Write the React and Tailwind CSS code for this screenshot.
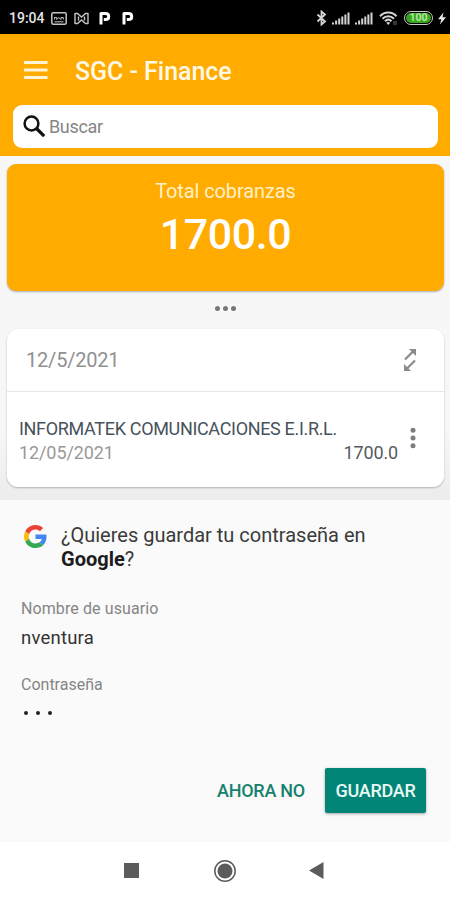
const signalBars = [2, 4, 6, 8, 10, 12]

function SignalIcon() {
  return (
    <svg width="18" height="13" viewBox="0 0 18 13" fill="#d4d4d4">
      {signalBars.map((height, i) => (
        <rect key={height} x={i * 3.1} y={12.5 - height} width="2" height={height} />
      ))}
    </svg>
  )
}

function ParkingIcon() {
  return (
    <svg width="12" height="14" viewBox="0 0 12 14" fill="none" stroke="#fff" strokeWidth="3">
      <path d="M2 13.500V2.500H6.200C8.500 2.500 9.700 3.600 9.700 5.400S8.500 8.500 6.500 8.500H4.800" strokeLinejoin="round" />
    </svg>
  )
}

function StatusBar() {
  return (
    <div className="flex h-[34px] items-center bg-black pt-[2px] pl-[9px] text-[#e5e5e5]">
      <span className="w-[42px] whitespace-nowrap text-[14px] font-medium">19:04</span>
      <svg width="16" height="13" viewBox="0 0 16 13" fill="none" stroke="#c4c4c4" strokeWidth="1.5">
        <rect x="0.8" y="0.8" width="14.4" height="11.4" rx="1.5" />
        <path d="M3.500 7.500V5.500h2.300v2M5.800 7.500l2-2 2 2M10 7.500V5.500h2.300v2M3.500 9.800h9" strokeWidth="1" />
      </svg>
      <svg className="ml-[7px]" width="15" height="13" viewBox="0 0 15 13" fill="none" stroke="#c4c4c4" strokeWidth="1.4">
        <path d="M1 1v11M14 1v11M1 1.500h2.500l4 3.500 4-3.500H14M1 11.500h2.500l4-3.500 4 3.500H14M4.500 4.500v4M10.500 4.500v4" />
      </svg>
      <div className="ml-2.5 flex gap-[11px]">
        <ParkingIcon />
        <ParkingIcon />
      </div>
      <div className="ml-auto flex items-center pr-[3px]">
        <svg width="11" height="16" viewBox="0 0 11 16" fill="none" stroke="#d4d4d4" strokeWidth="1.8">
          <path d="M1.500 4.500l7.500 7-3.500 3V1.500l3.500 3-7.500 7" />
        </svg>
        <span className="ml-[5px]"><SignalIcon /></span>
        <span className="ml-[5px]"><SignalIcon /></span>
        <svg className="ml-[6px]" width="19" height="15" viewBox="0 0 19 15" fill="none" stroke="#d4d4d4" strokeWidth="2">
          <path d="M1 5.200C5.500 0.300 13 0.300 17.500 5.200M3.500 7.800c3.400-3.500 8.100-3.500 11.500 0M6 10.300c2-2 4.500-2 6.500 0" />
          <path d="M7.300 11.800a3 3 0 013.900 0l-1.950 2.200z" fill="#d4d4d4" stroke="none" />
          <path d="M15 10v4M17 10v4" strokeWidth="0.9" stroke="#777" />
        </svg>
        <div className="ml-[6px] flex h-[14px] w-[29px] items-center justify-center rounded-full border-[1.5px] border-[#c8c8c8] bg-black p-px">
          <div className="flex h-full w-full items-center justify-center rounded-full bg-[#38a51f] text-[10.5px] leading-none font-bold text-[#b5e8a0]">
            100
          </div>
        </div>
        <svg className="mr-px ml-[5px]" width="8" height="13" viewBox="0 0 8 13" fill="#ececec">
          <path d="M5.500 0.500L0 7.300h3.300L2 12.500l6-7.300H4.500z" />
        </svg>
      </div>
    </div>
  )
}

function Header() {
  return (
    <header className="h-[122px] bg-[#ffab00] pt-[16px] pr-3 pl-[13px]">
      <div className="flex h-[42px] items-center pl-[11px]">
        <svg className="-mt-[3px]" width="24" height="18" viewBox="0 0 24 18" fill="#fff3d6">
          <rect y="0" width="23.5" height="3" />
          <rect y="7.5" width="23.5" height="3" />
          <rect y="15" width="23.5" height="3" />
        </svg>
        <h1 className="mt-px ml-[27px] text-[25px] font-medium tracking-[-0.05px] whitespace-nowrap text-[#fff8e6]">SGC - Finance</h1>
      </div>
      <div className="mt-[13px] flex h-[43px] items-center rounded-[9px] bg-white pl-[10px]">
        <svg className="-mt-px" width="23" height="23" viewBox="0 0 23 23" fill="none" stroke="#111" strokeWidth="2.5">
          <circle cx="8.500" cy="8.500" r="6.900" />
          <path d="M13.500 13.500l7.700 7.700" strokeWidth="3.2" />
        </svg>
        <span className="ml-[3px] text-[18px] tracking-[-0.35px] text-[#858585]">Buscar</span>
      </div>
    </header>
  )
}

function TotalCard() {
  return (
    <section className="mr-1.5 ml-[7px] h-[127px] rounded-[9px] bg-[#ffab00] pt-[14px] text-center shadow-[0_1px_2px_rgba(0,0,0,0.3)]">
      <p className="text-[20px] leading-[26px] tracking-[-0.1px] text-[#fff0c8]">Total cobranzas</p>
      <p className="text-[43px] leading-[60px] font-medium tracking-[-0.4px] text-white">1700.0</p>
    </section>
  )
}

function MovementsCard() {
  return (
    <section className="mr-1.5 ml-[7px] h-[158px] rounded-[11px] bg-white shadow-[0_1px_2px_rgba(0,0,0,0.25)]">
      <div className="flex h-[63px] items-center justify-between border-b border-[#e6e6e6] pr-[27px] pl-[19px]">
        <span className="text-[20px] tracking-[-0.2px] text-[#919191]">12/5/2021</span>
        <svg width="14" height="24" viewBox="0 0 14 24" fill="#8a8a8a" stroke="#8a8a8a">
          <path d="M2 11.500L10 3.500M12 12.500L4 20.500" strokeWidth="2.2" />
          <path d="M6 1h7v7zM8 23H1v-7z" stroke="none" />
        </svg>
      </div>
      <div className="flex pt-[25px] pl-3">
        <div className="w-[379px] leading-6">
          <p className="text-[18px] tracking-[-0.33px] whitespace-nowrap text-[#48525a]">INFORMATEK COMUNICACIONES E.I.R.L.</p>
          <div className="flex justify-between">
            <span className="text-[18px] tracking-[-0.1px] text-[#999]">12/05/2021</span>
            <span className="text-[18px] tracking-[-0.15px] text-[#555a5e]">1700.0</span>
          </div>
        </div>
        <svg className="mt-[10px] ml-[11px]" width="8" height="22" viewBox="0 0 8 22" fill="#7d7d7d">
          <circle cx="4" cy="3.200" r="2.500" />
          <circle cx="4" cy="11" r="2.500" />
          <circle cx="4" cy="18.800" r="2.500" />
        </svg>
      </div>
    </section>
  )
}

function GoogleLogo() {
  return (
    <svg width="23" height="23" viewBox="0 0 48 48">
      <path fill="#EA4335" d="M24 9.500c3.540 0 6.710 1.220 9.210 3.600l6.850-6.850C35.900 2.380 30.470 0 24 0 14.620 0 6.510 5.380 2.560 13.220l7.980 6.190C12.430 13.720 17.740 9.500 24 9.500z" />
      <path fill="#4285F4" d="M46.980 24.550c0-1.570-.15-3.090-.38-4.550H24v9.020h12.940c-.58 2.960-2.260 5.480-4.780 7.180l7.730 6c4.510-4.180 7.090-10.360 7.090-17.650z" />
      <path fill="#FBBC05" d="M10.530 28.590c-.48-1.450-.76-2.990-.76-4.590s.27-3.140.76-4.590l-7.980-6.190C.92 16.460 0 20.120 0 24c0 3.880.92 7.540 2.560 10.780l7.970-6.190z" />
      <path fill="#34A853" d="M24 48c6.480 0 11.930-2.130 15.890-5.810l-7.730-6c-2.150 1.450-4.920 2.300-8.160 2.300-6.260 0-11.570-4.220-13.470-9.910l-7.980 6.190C6.510 42.620 14.620 48 24 48z" />
    </svg>
  )
}

function SavePasswordSheet() {
  return (
    <section className="flex h-[342px] flex-col bg-[#fafafa] pt-[23px] pl-[21px]">
      <div className="flex">
        <div className="ml-[3px] w-6 pt-[2px]"><GoogleLogo /></div>
        <p className="ml-[13px] text-[20px] leading-6 whitespace-nowrap text-[#3a3a3a]">
          ¿Quieres guardar tu contraseña en
          <br />
          <b className="font-bold text-[#1c1c1c]">Google</b>?
        </p>
      </div>
      <p className="mt-[27px] text-[16px] leading-[22px] tracking-[0.1px] text-[#858585]">Nombre de usuario</p>
      <p className="mt-[6px] text-[18.5px] leading-6 tracking-[0.2px] text-[#333]">nventura</p>
      <p className="mt-[24px] text-[16px] leading-[22px] text-[#858585]">Contraseña</p>
      <div className="mt-[15px] ml-[3px] flex gap-[8px]">
        <i className="size-1 rounded-full bg-[#222]" />
        <i className="size-1 rounded-full bg-[#222]" />
        <i className="size-1 rounded-full bg-[#222]" />
      </div>
      <div className="mt-[53px] flex items-center justify-end pr-6">
        <button className="text-[18px] font-medium tracking-[-0.25px] whitespace-nowrap text-[#16826e]">AHORA NO</button>
        <button className="ml-[20px] h-[45px] w-[101px] rounded-[2px] bg-[#028576] text-[18px] font-medium tracking-[-0.25px] text-[#e9f8f4] shadow-[0_1px_3px_rgba(0,0,0,0.35)]">
          GUARDAR
        </button>
      </div>
    </section>
  )
}

function NavigationBar() {
  return (
    <nav className="flex h-[58px] items-center bg-white pb-px pl-[124px]">
      <div className="size-[15px] bg-[#5c5c5c]" />
      <svg className="ml-[74px]" width="24" height="24" viewBox="0 0 24 24">
        <circle cx="12" cy="12" r="10.200" fill="none" stroke="#5c5c5c" strokeWidth="1.5" />
        <circle cx="12" cy="12" r="7.500" fill="#5c5c5c" />
      </svg>
      <svg className="ml-[72px]" width="15" height="17" viewBox="0 0 15 17" fill="#5c5c5c">
        <path d="M0 8.500L14.500 0v17z" />
      </svg>
    </nav>
  )
}

export default function App() {
  return (
    <div className="h-[900px] w-[450px] overflow-hidden bg-[#f4f4f4] font-['Roboto',sans-serif]">
      <StatusBar />
      <Header />
      <main className="flex h-[344px] flex-col bg-linear-to-b from-[#f7f7f7] from-80% to-[#ececec] pt-2">
        <TotalCard />
        <div className="flex h-[38px] items-center justify-center gap-[3px] pb-1">
          <i className="size-[5px] rounded-full bg-[#777]" />
          <i className="size-[5px] rounded-full bg-[#777]" />
          <i className="size-[5px] rounded-full bg-[#777]" />
        </div>
        <MovementsCard />
      </main>
      <SavePasswordSheet />
      <NavigationBar />
    </div>
  )
}
